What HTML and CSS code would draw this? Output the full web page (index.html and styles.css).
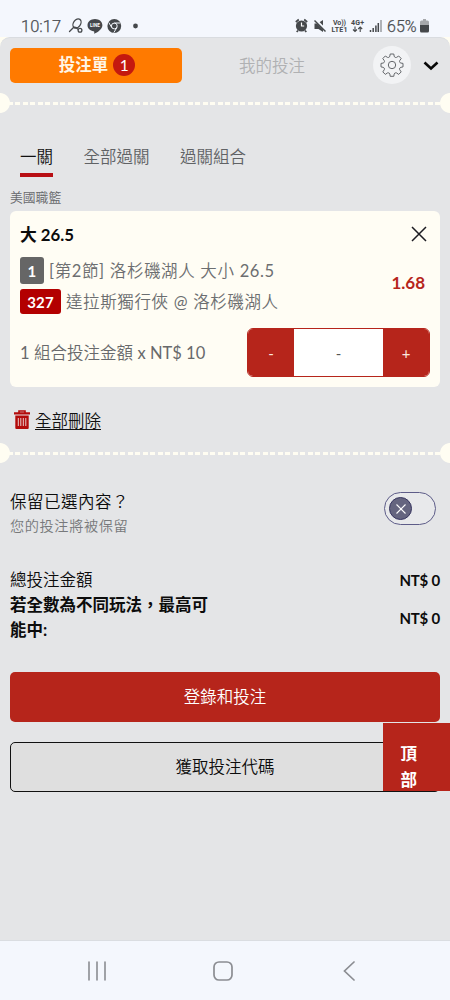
FILE: index.html
```html
<!DOCTYPE html>
<html lang="zh-Hant">
<head>
<meta charset="utf-8">
<meta name="viewport" content="width=device-width, initial-scale=1">
<title>投注單</title>
<link rel="stylesheet" href="styles.css">
</head>
<body>
<header class="status">
  <span class="clock">10:17</span>
  <svg class="status-left" width="76" height="18" viewBox="0 0 76 18">
    <g fill="none" stroke="#45484b" stroke-width="1.3" stroke-linecap="round">
      <ellipse cx="9" cy="6.500" rx="3.500" ry="5" transform="rotate(35 9 6.500)"/>
      <path d="M5.500 10.500L1.500 14.500M5.800 10.300C8 10 9 11 9.500 12"/>
      <circle cx="12" cy="13.300" r="1.900"/>
    </g>
    <path d="M27 2C22.700 2 19.500 4.800 19.500 8.200c0 3.100 2.700 5.500 6.100 6.100.9.200.8.800.5 2.500 4.500-2.100 8.300-5 8.300-8.600C34.400 4.800 31.200 2 27 2z" fill="#45484b"/>
    <text x="26.900" y="10" text-anchor="middle" font-size="4.600" font-weight="700" fill="#fff">LINE</text>
    <circle cx="46.300" cy="9" r="6.900" fill="#45484b"/>
    <circle cx="46.300" cy="9" r="2.900" fill="none" stroke="#f3f7fd" stroke-width="1"/>
    <path d="M46.300 6h6M43.700 10.500L40.800 5.500M48.900 10.500L45.800 15.700" stroke="#f3f7fd" stroke-width="1"/>
    <circle cx="67.500" cy="9" r="2.400" fill="#45484b"/>
  </svg>
  <span class="spacer"></span>
  <svg class="status-right" width="87" height="18" viewBox="0 0 87 18">
    <circle cx="6.500" cy="9" r="5.600" fill="#45484b"/>
    <path d="M.8 5L3.800 2.500M12.200 5L9.200 2.500M3 13.500L1.700 15M10 13.500l1.300 1.500" stroke="#45484b" stroke-width="1.700"/>
    <path d="M6.500 5.500V9h2.700" fill="none" stroke="#fff" stroke-width="1.200"/>
    <path d="M19.500 6.500h3L28 3v12l-4.500-3h-4z" fill="#45484b"/>
    <path d="M20 2.500L32 14.500" stroke="#f3f7fd" stroke-width="2.800"/>
    <path d="M19.500 3.500L30.500 14.500" stroke="#45484b" stroke-width="1.400"/>
    <g fill="#45484b" font-size="7" font-weight="700">
      <text x="38" y="8" textLength="13">Vo))</text>
      <text x="36.500" y="15.200" textLength="16">LTE1</text>
      <text x="56" y="8" textLength="13">4G+</text>
    </g>
    <path d="M60 9.500v5M58 12.500l2 2 2-2M65.200 15v-5M63.200 12l2-2 2 2" fill="none" stroke="#45484b" stroke-width="1.100"/>
    <path d="M75.500 13v2M78.200 11v4M80.900 8.500v6.500M83.300 6v9" stroke="#45484b" stroke-width="1.500"/>
    <path d="M86 3v12" stroke="#989b9f" stroke-width="1.500"/>
  </svg>
  <span class="percent">65%</span>
  <svg class="battery" width="9" height="14" viewBox="0 0 9 14"><path d="M0 3q0-1.500 1.500-1.500H3V0h3v1.500h1.500Q9 1.500 9 3v4H0z" fill="#a6a8ab"/><path d="M0 6h9v6q0 1.500-1.500 1.500h-6Q0 13.500 0 12z" fill="#45484b"/></svg>
</header>

<div class="backdrop">
<main class="panel">
  <div class="top">
    <button class="slip-tab">投注單<span class="count">1</span></button>
    <span class="my-bets">我的投注</span>
    <span class="gear">
      <svg width="24" height="24" viewBox="0 0 24 24" fill="none" stroke="#63666a" stroke-width="1" stroke-linejoin="round">
        <path d="M10.200 1h3.600q.2 2.700 1 3.200 1 .5 1.700.2L18.700 3l2.500 2.500-1.500 2.200q-.4.800.1 1.700.5.800 3.200 1v3.500q-2.700.3-3.200 1.100-.5.900-.1 1.700l1.500 2.200-2.500 2.500-2.200-1.500q-.8-.3-1.700.2-.8.500-1 3.200h-3.600q-.2-2.700-1-3.200-.9-.5-1.700-.2l-2.200 1.500-2.500-2.500 1.500-2.200q.4-.8-.1-1.700-.5-.8-3.200-1.100v-3.500q2.700-.2 3.200-1 .5-.9.100-1.700L2.800 5.500 5.300 3l2.200 1.400q.8.300 1.700-.2.800-.5 1-3.200z"/>
        <circle cx="12" cy="12" r="3.700"/>
      </svg>
    </span>
    <svg class="chevron" width="16" height="10" viewBox="0 0 16 10"><path d="M1.500 1.500L8 7.500l6.500-6" fill="none" stroke="#080808" stroke-width="2.600"/></svg>
  </div>
  <div class="tear"></div>
  <nav class="tabs">
    <span class="tab active">一關</span><span class="tab">全部過關</span><span class="tab">過關組合</span>
  </nav>
  <div class="league">美國職籃</div>
  <section class="card">
    <div class="card-head">
      <strong>大 26.5</strong>
      <svg width="16" height="16" viewBox="0 0 16 16"><path d="M1 1l14 14M15 1L1 15" stroke="#1c1c22" stroke-width="1.500"/></svg>
    </div>
    <div class="pick">
      <div class="lines">
        <div class="line"><span class="tag grey">1</span><span class="market"><span class="num">[</span>第<span class="num">2</span>節<span class="num">]</span> 洛杉磯湖人 大小 <span class="num">26.5</span></span></div>
        <div class="line"><span class="tag red">327</span><span class="teams">達拉斯獨行俠 <span class="num">@</span> 洛杉磯湖人</span></div>
      </div>
      <span class="odds">1.68</span>
    </div>
    <div class="stake">
      <span class="stake-label"><span class="num">1</span> 組合投注金額 <span class="num">x NT$ 10</span></span>
      <div class="stepper"><button class="step">-</button><span class="amount">-</span><button class="step">+</button></div>
    </div>
  </section>
  <div class="clear">
    <svg width="16" height="19" viewBox="0 0 16 19">
      <path d="M5 3V1h6v2" fill="none" stroke="#b30b0b" stroke-width="1.600"/>
      <path d="M0 2.200h16v2.400H0zM1.300 5.500h13.400V18q0 1-1 1H2.300q-1 0-1-1z" fill="#b30b0b"/>
      <path d="M4.300 8v8M6.800 8v8M9.300 8v8M11.800 8v8" stroke="#e9cdce" stroke-width="1"/>
    </svg>
    <span class="clear-text">全部刪除</span>
  </div>
  <div class="tear"></div>
  <div class="keep">
    <div>
      <div class="keep-title">保留已選內容？</div>
      <div class="keep-sub">您的投注將被保留</div>
    </div>
    <div class="toggle"><span class="knob"><svg width="12" height="12" viewBox="0 0 12 12"><path d="M1.500 1.500l9 9M10.500 1.500l-9 9" stroke="#fff" stroke-width="1.100"/></svg></span></div>
  </div>
  <div class="total"><span>總投注金額</span><b>NT$ 0</b></div>
  <div class="total win"><span class="win-label">若全數為不同玩法，最高可能中:</span><b>NT$ 0</b></div>
  <div class="actions">
    <button class="action primary">登錄和投注</button>
    <button class="action secondary">獲取投注代碼</button>
    <div class="to-top">頂<br>部</div>
  </div>
</main>
</div>

<footer class="navbar">
  <svg width="20" height="20" viewBox="0 0 20 20"><path d="M2 1v18M10 1v18M18 1v18" stroke="#8b8d92" stroke-width="1.600" stroke-linecap="round"/></svg>
  <svg class="home" width="20" height="20" viewBox="0 0 20 20"><rect x="1" y="1" width="18" height="18" rx="5" fill="none" stroke="#8b8d92" stroke-width="1.700"/></svg>
  <svg width="12" height="20" viewBox="0 0 12 20"><path d="M11 1L1.500 10l9.500 9" fill="none" stroke="#8b8d92" stroke-width="1.700" stroke-linecap="round"/></svg>
</footer>
</body>
</html>
```
FILE: styles.css
```css
* { box-sizing: border-box; }
body {
  margin: 0;
  width: 450px;
  height: 1000px;
  overflow: hidden;
  display: flex;
  flex-direction: column;
  background: #f4f7fd;
  color: #0c0c0c;
  font: 16.5px/24px Lato, "Noto Sans CJK TC", sans-serif;
  white-space: nowrap;
}
svg { display: block; flex: none; }
button { border: 0; padding: 0; font: inherit; color: inherit; }
.num { font-weight: 400; }

.status {
  height: 37px;
  flex: none;
  padding: 15px 21px 0 21px;
  display: flex;
  align-items: center;
  font-family: Roboto, sans-serif;
  color: #494c50;
}
.clock { width: 47px; padding-top: 1px; font-size: 16.5px; font-weight: 300; -webkit-text-stroke: .25px; }
.spacer { flex: 1; }
.percent { width: 31px; margin: 0 2px 0 5px; padding-top: 1px; font-size: 16px; font-weight: 300; -webkit-text-stroke: .25px; }

.backdrop { height: 903px; flex: none; background: #fffdf2; }
.panel {
  height: 903px;
  background: #e4e5e7;
  border-radius: 10px 10px 0 0;
  border-top: 1px solid #d9dce0;
}
.top { height: 55px; display: flex; align-items: center; padding: 0 11px 0 10px; }
.slip-tab {
  width: 172px;
  height: 35px;
  margin-bottom: 1px;
  border-radius: 5px;
  background: #ff7a00;
  color: #fff6e5;
  font-weight: 700;
  display: flex;
  align-items: center;
  justify-content: center;
  gap: 5px;
  padding-left: 2px;
}
.count {
  width: 22px;
  height: 22px;
  border-radius: 50%;
  background: #c4190f;
  color: #fff;
  font-size: 15.5px;
  font-weight: 400;
  line-height: 22px;
}
.my-bets { width: 191px; padding-left: 57px; color: #b0b1b3; font-weight: 350; }
.gear { width: 38px; height: 38px; margin-bottom: 1px; border-radius: 50%; background: #f2f3f5; display: grid; place-items: center; }
.chevron { margin-left: 12px; margin-right: -1px; }

.tear {
  height: 20px;
  background:
    radial-gradient(circle at 0 10px, #fffdf2 9.5px, transparent 10.3px),
    radial-gradient(circle at 100% 10px, #fffdf2 9.5px, transparent 10.3px),
    repeating-linear-gradient(90deg, #fffdf2 0 5px, transparent 5px 7.5px) 8px 9px / 434px 3px no-repeat;
}

.tabs { display: flex; gap: 30.5px; padding: 31px 20px 0; }
.tab { height: 33px; line-height: 26px; font-weight: 350; color: #606265; }
.tab.active { color: #111; border-bottom: 4px solid #b80f14; }
.league { height: 34px; padding: 7px 10px 0; line-height: 26px; font-size: 12.8px; color: #67696c; font-weight: 350; }

.card { height: 176px; margin: 0 10px; padding: 12px 10px 0; border-radius: 6px; background: #fffdf4; }
.card-head { height: 34px; display: flex; justify-content: space-between; align-items: flex-start; padding-right: 3px; }
.card-head svg { margin-top: 3px; }
.card-head strong { font-weight: 700; font-size: 16.8px; }
.pick { display: flex; justify-content: space-between; align-items: center; height: 57px; }
.lines { display: grid; gap: 5px; }
.line { display: flex; align-items: center; gap: 5px; color: #6c6e70; font-weight: 350; letter-spacing: .6px; }
.tag { border-radius: 3px; color: #fff; font-size: 15px; font-weight: 700; text-align: center; letter-spacing: .2px; }
.grey { width: 24px; height: 27px; line-height: 28px; background: #666; }
.red { width: 41px; height: 25px; line-height: 26px; background: #b30000; }
.odds { color: #b6251b; font-weight: 700; font-size: 17px; padding: 0 5px 5px 0; }
.stake { display: flex; justify-content: space-between; align-items: center; margin-top: 14px; }
.stake-label { padding-top: 1px; color: #68696b; font-weight: 350; }
.stepper { width: 183px; height: 49px; display: flex; border: 1px solid #b6251b; border-radius: 6px; overflow: hidden; background: #fff; }
.step { width: 46px; padding-top: 1px; background: #b6251b; color: #fbe8df; font-weight: 400; font-size: 15px; }
.amount { flex: 1; line-height: 49px; text-align: center; color: #555; font-size: 15px; }

.clear { height: 56px; display: flex; align-items: center; gap: 5px; padding: 10px 14px 0; }
.clear svg { margin-bottom: 2px; }
.clear-text { padding-top: 1px; font-weight: 350; text-decoration: underline; text-underline-offset: 2px; color: #111; }

.keep { height: 103px; display: flex; justify-content: space-between; align-items: flex-start; padding: 27px 14px 0 10px; }
.keep-title { line-height: 25px; letter-spacing: .5px; font-weight: 350; }
.keep-sub { line-height: 22px; font-size: 14.2px; letter-spacing: .6px; color: #77797b; font-weight: 350; }
.toggle { width: 52px; height: 33px; margin-top: 2px; padding: 4px; border: 1px solid #5d5c88; border-radius: 17px; background: #e8e9eb; }
.knob { width: 23px; height: 23px; border-radius: 50%; border: 1px solid #373560; background: #65657f; display: grid; place-items: center; }

.total { display: flex; justify-content: space-between; align-items: center; padding: 1px 10px 0; height: 26px; font-weight: 350; }
.total b { font-size: 15px; font-weight: 700; letter-spacing: -.2px; }
.win { height: 51px; padding-top: 0; }
.win-label { width: 202px; padding-top: 1px; line-height: 25.5px; white-space: normal; font-weight: 700; }

.actions { position: relative; padding: 28.5px 10px 0; display: grid; gap: 20px; }
.action { height: 50px; padding-top: 1px; border-radius: 5px; font-weight: 350; }
.primary { background: #b6251b; color: #fff; }
.secondary { background: #dfdfdf; border: 1px solid #111; }
.to-top {
  position: absolute;
  right: 0;
  top: 80px;
  width: 67.5px;
  height: 67.5px;
  padding: 19px 15px 0 0;
  text-align: center;
  font-weight: 700;
  line-height: 25.5px;
  color: #fff;
  background: #b6251b;
}

.navbar { height: 60px; flex: none; border-top: 1px solid #dadde1; display: flex; align-items: center; padding: 1px 95px 0 87px; justify-content: space-between; }
.home { margin-right: 5px; }
```
